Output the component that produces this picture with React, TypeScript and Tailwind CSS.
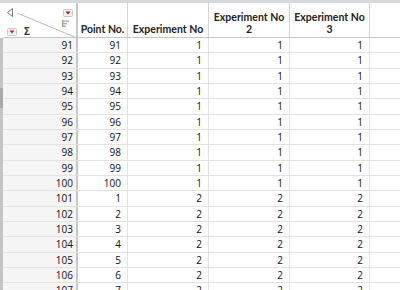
import React from "react";

type Row = { n: number; p: number; e1: number; e2: number; e3: number };

const rows: Row[] = [];
for (let n = 91; n <= 107; n++) {
  const p = n <= 100 ? n : n - 100;
  const e = n <= 100 ? 1 : 2;
  rows.push({ n, p, e1: e, e2: e, e3: e });
}

function DropBtn() {
  return (
    <svg width="10" height="8" viewBox="0 0 10 8">
      <rect x="0.5" y="0.5" width="9" height="7" rx="1" fill="#f3f3f3" stroke="#c9c9c9" />
      <path d="M2.5 2.5 L7.5 2.5 L5 5.5 Z" fill="#d0101c" />
    </svg>
  );
}

export default function App() {
  return (
    <div
      className="w-[400px] h-[290px] overflow-hidden bg-white flex flex-col text-[#111]"
      style={{ fontFamily: '"Open Sans", "Noto Sans", sans-serif' }}
    >
      <div className="h-[3px] shrink-0 bg-[#d5d9de]" />
      <div className="flex flex-1 min-h-0">
        <div className="w-[3px] shrink-0 flex flex-col">
          <div className="h-[35px] bg-white" />
          <div className="flex-1 bg-[#c4c4c4] flex flex-col">
            <div className="h-[50px]" />
            <div className="h-[20px] bg-[#a9a9a9]" />
          </div>
        </div>
        <div className="flex-1 flex flex-col min-w-0">
          {/* header */}
          <div className="flex h-[35px] shrink-0 border-b border-[#c6c6c6]">
            <div className="relative w-[75px] shrink-0 border-r-2 border-[#c6c6c6] bg-white">
              <svg className="absolute left-0 top-0" width="73" height="34" viewBox="0 0 73 34">
                <path d="M9.5 5.5 L4.5 9.5 L9.5 13.5 Z" fill="none" stroke="#7a7a7a" strokeWidth="1" />
                <line x1="14" y1="10" x2="74" y2="35" stroke="#b9b9b9" strokeWidth="1" />
                <rect x="59" y="17" width="1.3" height="7" fill="#8faa8a" />
                <rect x="60" y="17.5" width="6" height="1.3" fill="#9bb596" />
                <rect x="60" y="20" width="4" height="1.3" fill="#9bb596" />
                <rect x="60" y="22.5" width="3" height="1.3" fill="#9bb596" />
              </svg>
              <div className="absolute left-[60px] top-[6px]">
                <DropBtn />
              </div>
              <div className="absolute left-[4px] top-[25px]">
                <DropBtn />
              </div>
              <div className="absolute left-[21px] top-[22px] text-[10px] font-bold leading-[12px] text-[#333]">
                Σ
              </div>
            </div>
            <HeadCell w="w-[50px]" lines={["Point No."]} />
            <HeadCell w="w-[81px]" lines={["Experiment No"]} />
            <HeadCell w="w-[81px]" lines={["Experiment No", "2"]} />
            <HeadCell w="w-[80px]" lines={["Experiment No", "3"]} />
            <div className="flex-1" />
          </div>
          {/* rows */}
          <div className="flex flex-col">
            {rows.map((r) => (
              <div key={r.n} className="flex h-[15.33px] shrink-0 border-b border-[#e2e2e2] text-[10px] leading-[14px]">
                <div className="w-[75px] shrink-0 bg-[#f5f5f5] border-r-2 border-[#c6c6c6] text-right pr-[3px]">
                  {r.n}
                </div>
                <Cell w="w-[50px]" v={r.p} />
                <Cell w="w-[81px]" v={r.e1} />
                <Cell w="w-[81px]" v={r.e2} />
                <Cell w="w-[80px]" v={r.e3} />
                <div className="flex-1" />
              </div>
            ))}
          </div>
        </div>
      </div>
    </div>
  );
}

function HeadCell({ w, lines }: { w: string; lines: string[] }) {
  return (
    <div
      className={`${w} shrink-0 border-r border-[#d4d4d4] flex flex-col justify-end items-center pb-[2px] text-[10.5px] font-bold leading-[12px] text-[#222]`}
      style={{ fontFamily: 'Lato, "Open Sans", sans-serif' }}
    >
      {lines.map((l, i) => (
        <div key={i} className="whitespace-nowrap h-[12px]">
          {l}
        </div>
      ))}
    </div>
  );
}

function Cell({ w, v }: { w: string; v: number }) {
  return (
    <div className={`${w} shrink-0 border-r border-[#e2e2e2] text-right pr-[6px]`}>{v}</div>
  );
}
